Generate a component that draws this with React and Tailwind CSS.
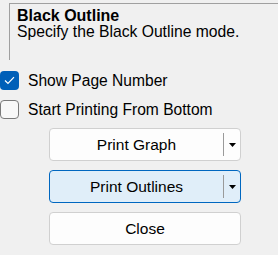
import React from "react";

function Arrow() {
  return (
    <svg width="7" height="4" viewBox="0 0 7 4" className="block">
      <path d="M0 0 L7 0 L3.5 4 Z" fill="#000" />
    </svg>
  );
}

function SplitButton({ label, active }) {
  return (
    <div
      className={
        "flex h-[33px] w-[192px] items-stretch rounded-[4px] border " +
        (active ? "border-[#0067c0] bg-[#e0eef9]" : "border-[#d0d0d0] bg-[#fdfdfd]")
      }
    >
      <div className="flex flex-1 items-center justify-center text-[15.5px] leading-none text-black">
        {label}
      </div>
      <div className="my-[4px] w-px bg-[#9a9a9a]" />
      <div className="flex w-[16px] items-center justify-center pl-[1px]">
        <Arrow />
      </div>
    </div>
  );
}

export default function App() {
  return (
    <div
      className="h-[255px] w-[278px] overflow-hidden bg-[#f0f0f0] text-black"
      style={{ fontFamily: '"Liberation Sans", Arial, sans-serif' }}
    >
      <div className="pt-[3px]">
        <div className="ml-[9px] h-[57px] w-[300px] border-l border-t border-[#a0a0a0] pl-[7px] pt-[4px]">
          <div className="text-[16px] font-bold leading-[16px]">Black Outline</div>
          <div className="text-[15.7px] leading-[16px]">Specify the Black Outline mode.</div>
        </div>
      </div>

      <div className="mt-[6px]">
        <div className="flex h-[29px] items-center">
          <div className="flex h-[19px] w-[19px] items-center justify-center rounded-[4px] bg-[#005fb8]">
            <svg width="11" height="9" viewBox="0 0 11 9">
              <path d="M1 4.5 L4 7.5 L10 1.2" fill="none" stroke="#fff" strokeWidth="1.2" />
            </svg>
          </div>
          <span className="ml-[9px] text-[15.6px] leading-none">Show Page Number</span>
        </div>
        <div className="flex h-[29px] items-center">
          <div className="h-[19px] w-[19px] rounded-[4px] border border-[#7a7a7a] bg-[#f8f8f8]" />
          <span className="ml-[9px] text-[15.6px] leading-none">Start Printing From Bottom</span>
        </div>
      </div>

      <div className="ml-[49px] mt-[4px] flex flex-col gap-[9px]">
        <SplitButton label="Print Graph" />
        <SplitButton label="Print Outlines" active />
        <div className="flex h-[33px] w-[192px] items-center justify-center rounded-[4px] border border-[#d0d0d0] bg-[#fdfdfd] text-[15.5px] leading-none">
          Close
        </div>
      </div>
    </div>
  );
}
